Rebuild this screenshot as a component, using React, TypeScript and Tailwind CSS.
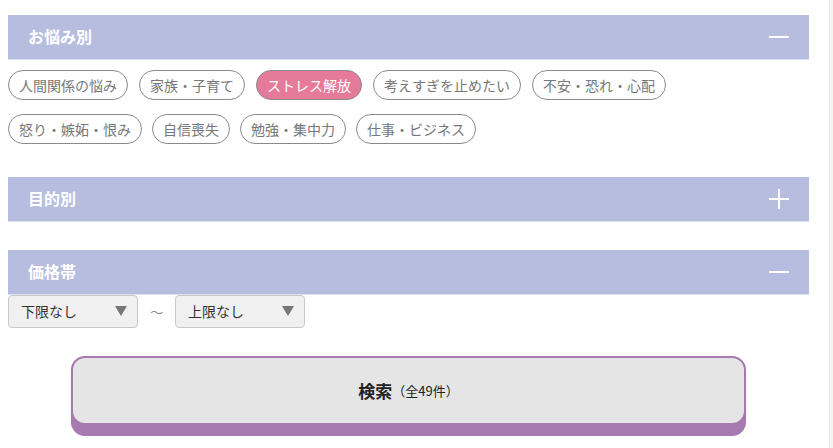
import React from "react";

const font = { fontFamily: '"Noto Sans CJK JP", "Noto Sans", sans-serif' };

function Header({ title, icon }: { title: string; icon: "minus" | "plus" }) {
  return (
    <div className="flex h-[45px] items-center justify-between border-b border-[#dde0ef] bg-[#b7bddf] pl-[20px] pr-[20px]">
      <span className="mb-[3px] text-[16px] font-bold leading-[20px] text-white">{title}</span>
      <span className="relative block h-[20px] w-[20px]">
        <span className="absolute left-0 top-[9px] h-[2px] w-[20px] bg-white" />
        {icon === "plus" && <span className="absolute left-[9px] top-0 h-[20px] w-[2px] bg-white" />}
      </span>
    </div>
  );
}

const row1 = ["人間関係の悩み", "家族・子育て", "ストレス解放", "考えすぎを止めたい", "不安・恐れ・心配"];
const row2 = ["怒り・嫉妬・恨み", "自信喪失", "勉強・集中力", "仕事・ビジネス"];

function Chip({ label }: { label: string }) {
  const active = label === "ストレス解放";
  return (
    <span
      className={
        "flex h-[30px] items-center rounded-full border border-[#8a8a8a] px-[10px] text-[14px] " +
        (active ? "bg-[#e57a9b] text-white" : "bg-white text-[#777777]")
      }
    >
      {label}
    </span>
  );
}

function Select({ label }: { label: string }) {
  return (
    <div className="flex h-[33px] w-[130px] items-center justify-between rounded-[4px] border border-[#c9c9c9] bg-[#f0f0f0] pl-[12px] pr-[10px]">
      <span className="text-[14px] text-[#333333]">{label}</span>
      <svg width="12" height="11" viewBox="0 0 12 11">
        <polygon points="0,0 12,0 6,10" fill="#777777" />
      </svg>
    </div>
  );
}

export default function App() {
  return (
    <div className="flex h-[448px] w-[833px] overflow-hidden bg-white" style={font}>
      <div className="w-[829px] pl-[8px] pr-[20px] pt-[15px]">
        <Header title="お悩み別" icon="minus" />
        <div className="mt-[10px] flex flex-col gap-[14px]">
          <div className="flex gap-[11px]">
            {row1.map((l) => (
              <Chip key={l} label={l} />
            ))}
          </div>
          <div className="flex gap-[10px]">
            {row2.map((l) => (
              <Chip key={l} label={l} />
            ))}
          </div>
        </div>
        <div className="mt-[33px]">
          <Header title="目的別" icon="plus" />
        </div>
        <div className="mt-[28px]">
          <Header title="価格帯" icon="minus" />
        </div>
        <div className="flex items-center">
          <Select label="下限なし" />
          <span className="w-[37px] text-center text-[13px] text-[#888888]">～</span>
          <Select label="上限なし" />
        </div>
        <div className="mt-[28px] flex justify-center">
          <button className="flex h-[69px] w-[675px] items-center justify-center rounded-[14px] border-2 border-[#a779b1] bg-[#e5e5e5] shadow-[0_11px_0_#a779b1]">
            <span className="text-[17px] font-bold text-[#222222]">検索</span>
            <span className="text-[13px] text-[#222222]">（全49件）</span>
          </button>
        </div>
      </div>
      <div className="h-full w-[4px] border-l border-[#e8e8e0] bg-[#f5f5ef]" />
    </div>
  );
}
